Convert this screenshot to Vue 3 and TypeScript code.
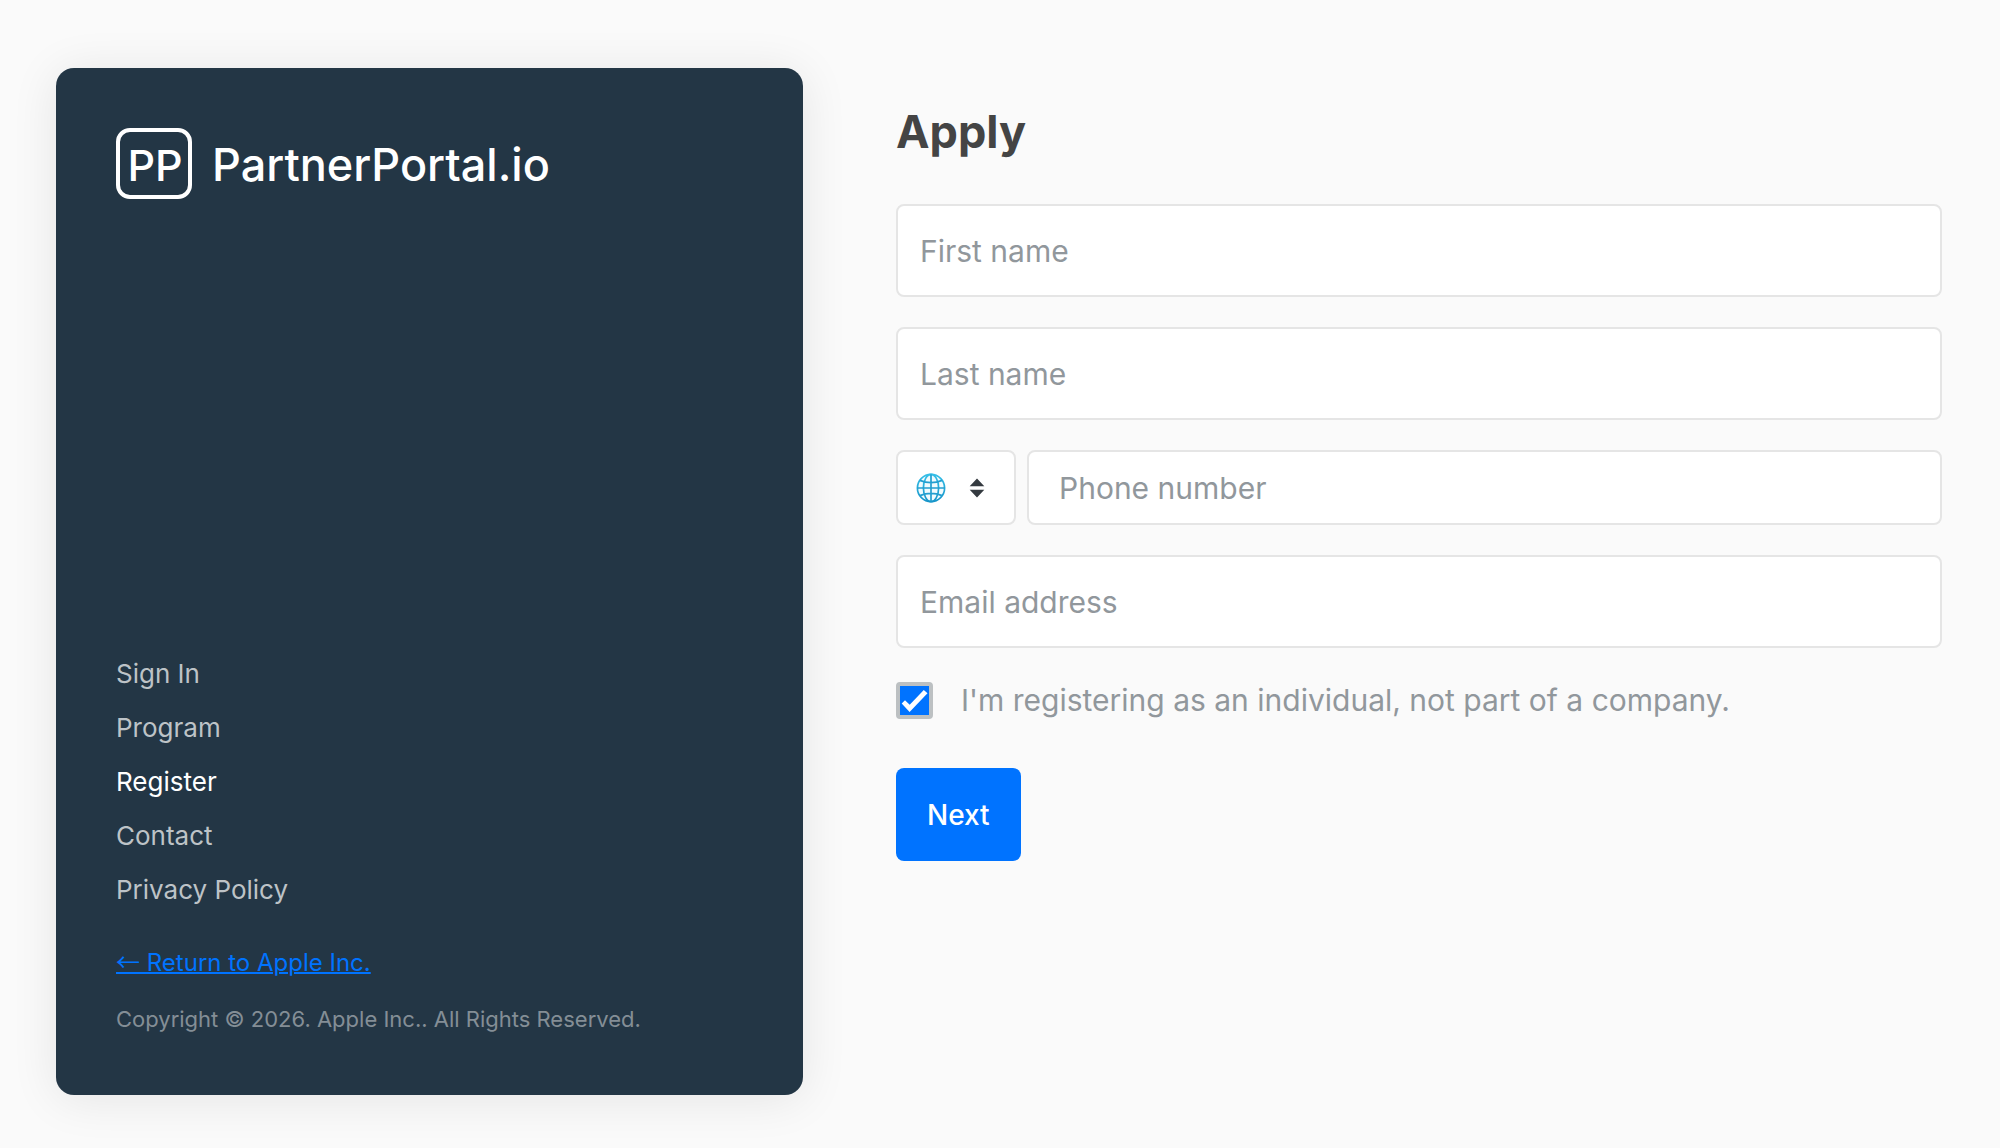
<script setup lang="ts">
import { reactive } from 'vue'

interface NavItem {
  label: string
  active?: boolean
}

const navItems: NavItem[] = [
  { label: 'Sign In' },
  { label: 'Program' },
  { label: 'Register', active: true },
  { label: 'Contact' },
  { label: 'Privacy Policy' },
]

const form = reactive({
  firstName: '',
  lastName: '',
  country: 'intl',
  phone: '',
  email: '',
  individual: true,
})
</script>

<template>
  <div class="page">
    <aside class="card">
      <a class="logo" href="#">
        <span class="logo-mark">PP</span>
        <span class="logo-name">PartnerPortal.io</span>
      </a>
      <div class="card-foot">
        <nav class="nav" aria-label="Main">
          <a v-for="item in navItems" :key="item.label" href="#" class="nav-link" :class="{ active: item.active }">{{ item.label }}</a>
        </nav>
        <a class="return" href="#"><span class="return-arrow">←</span> Return to Apple Inc.</a>
        <p class="copyright">Copyright © 2026. Apple Inc.. All Rights Reserved.</p>
      </div>
    </aside>

    <main class="content">
      <h1 class="title">Apply</h1>
      <form class="form" @submit.prevent>
        <input v-model="form.firstName" class="field" type="text" placeholder="First name" aria-label="First name" />
        <input v-model="form.lastName" class="field" type="text" placeholder="Last name" aria-label="Last name" />
        <div class="phone-row">
          <div class="country">
            <select v-model="form.country" class="country-select" aria-label="Phone number country">
              <option value="intl" label=" "></option>
            </select>
            <span class="country-icons">
              <svg class="globe" viewBox="0 0 30 30" aria-hidden="true">
                <defs>
                  <linearGradient id="globeStroke" x1="0" y1="0" x2="0" y2="1">
                    <stop offset="0" stop-color="#35bfe8" />
                    <stop offset="1" stop-color="#1795c9" />
                  </linearGradient>
                </defs>
                <g fill="none" stroke="url(#globeStroke)" stroke-width="1.7">
                  <circle cx="15" cy="15" r="13.6" fill="#f1fbfe" />
                  <ellipse cx="15" cy="15" rx="7.6" ry="13.6" />
                  <path d="M15 1.4 15.01 28.6M1.4 15 28.6 15.01M3.8 7.4Q15 12 26.2 7.4M3.8 22.6Q15 18 26.2 22.6" stroke="#239fd0" />
                </g>
              </svg>
              <svg class="arrows" viewBox="0 0 16 20" aria-hidden="true">
                <path d="M8 .5 15.3 8.2H.7zM8 19.5.7 11.8h14.6z" fill="#343a40" />
              </svg>
            </span>
          </div>
          <input v-model="form.phone" class="field phone" type="tel" placeholder="Phone number" aria-label="Phone number" />
        </div>
        <input v-model="form.email" class="field" type="email" placeholder="Email address" aria-label="Email address" />
        <label class="check-row">
          <span class="check">
            <input v-model="form.individual" class="check-input" type="checkbox" />
            <svg v-if="form.individual" class="check-mark" viewBox="0 0 37 37" aria-hidden="true">
              <path d="M5.7 21.6 9 18.2l4.7 4.5L27.8 8l3.7 3.3L13.6 30z" fill="#fff" />
            </svg>
          </span>
          <span>I'm registering as an individual, not part of a company.</span>
        </label>
        <button class="next" type="submit">Next</button>
      </form>
    </main>
  </div>
</template>

<style>
body {
  background: #fafafa;
}
</style>

<style scoped>
.page {
  box-sizing: border-box;
  min-height: 100vh;
  padding: 68px 58px 53px 56px;
  display: grid;
  grid-template-columns: 747fr 1046fr;
  gap: 93px;
  font-family: Inter, 'Liberation Sans', sans-serif;
}

.card {
  box-sizing: border-box;
  padding: 60px;
  display: flex;
  flex-direction: column;
  justify-content: space-between;
  border-radius: 18px;
  background: #233645;
  box-shadow: 0 4px 48px rgba(0, 0, 0, 0.09);
}

.logo {
  display: flex;
  align-items: center;
  gap: 20px;
  color: #fff;
  text-decoration: none;
  font-size: 45px;
  font-weight: 500;
  line-height: 64px;
}

.logo-mark {
  box-sizing: border-box;
  width: 76px;
  height: 71px;
  padding: 2px 0 0 2px;
  border: 4px solid #fff;
  border-radius: 14px;
  display: flex;
  align-items: center;
  justify-content: center;
  font-size: 43px;
}

.logo-name {
  padding-top: 2px;
}

.card-foot {
  display: flex;
  flex-direction: column;
  align-items: flex-start;
}

.nav {
  display: flex;
  flex-direction: column;
  align-items: flex-start;
}

.nav-link {
  color: #bdc3c7;
  font-size: 26px;
  line-height: 54px;
  text-decoration: none;
}

.nav-link.active {
  color: #fff;
}

.return {
  margin-top: 30px;
  color: #0073ff;
  font-size: 24px;
  line-height: 32px;
  text-decoration-thickness: 2px;
}

.return-arrow {
  font-family: 'Noto Sans CJK JP', sans-serif;
  line-height: 1;
}

.copyright {
  margin: 24px 0 0;
  color: #848e96;
  font-size: 22px;
  line-height: 32px;
}

.content {
  padding-top: 34px;
}

.title {
  margin: 0 0 42px;
  color: #444;
  font-size: 45px;
  font-weight: 700;
  line-height: 60px;
}

.form {
  display: flex;
  flex-direction: column;
  gap: 30px;
}

.field {
  box-sizing: border-box;
  width: 100%;
  height: 93px;
  padding: 0 22px;
  border: 2px solid #e5e5e5;
  border-radius: 8px;
  background: #fff;
  color: #444;
  font-family: inherit;
  font-size: 30px;
}

.field::placeholder {
  color: #91979c;
  opacity: 1;
}

.phone-row {
  display: grid;
  grid-template-columns: 120px 1fr;
  gap: 11px;
}

.country {
  display: grid;
}

.country-select,
.country-icons {
  grid-area: 1 / 1;
}

.country-select {
  appearance: none;
  border: 2px solid #e5e5e5;
  border-radius: 8px;
  background: #fff;
  font-size: 30px;
}

.country-icons {
  padding-left: 20px;
  display: flex;
  align-items: center;
  gap: 23px;
  pointer-events: none;
}

.globe {
  width: 30px;
  height: 30px;
}

.arrows {
  width: 16px;
  height: 20px;
}

.phone {
  height: 75px;
  padding: 0 30px;
}

.check-row {
  display: flex;
  align-items: center;
  gap: 28px;
  margin-top: 4px;
  color: #91979c;
  font-size: 30px;
  line-height: 37px;
}

.check {
  display: grid;
  width: 37px;
  height: 37px;
}

.check-input,
.check-mark {
  grid-area: 1 / 1;
  width: 37px;
  height: 37px;
}

.check-input {
  appearance: none;
  box-sizing: border-box;
  margin: 0;
  border: 4px solid #bcc0c2;
  border-radius: 4px;
  background: #fff;
}

.check-input:checked {
  background: #0073ff;
}

.check-mark {
  pointer-events: none;
}

.next {
  align-self: flex-start;
  height: 93px;
  margin-top: 19px;
  padding: 0 31px;
  border: 0;
  border-radius: 8px;
  background: #0073ff;
  color: #fff;
  font-family: inherit;
  font-size: 28px;
  font-weight: 500;
}
</style>
